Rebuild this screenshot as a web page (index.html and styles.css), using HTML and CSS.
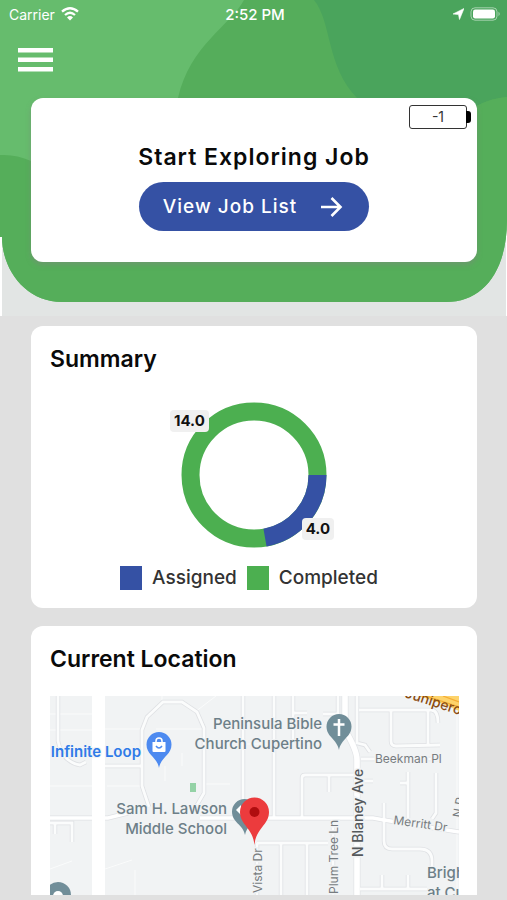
FILE: index.html
```html
<!DOCTYPE html>
<html lang="en">
<head>
  <meta charset="UTF-8">
  <meta name="viewport" content="width=device-width, initial-scale=1.0">
  <title>Job Dashboard</title>
  <link rel="stylesheet" href="styles.css">
</head>
<body>
  <div class="screen">
    <header class="header">
      <svg class="header-bg" viewBox="0 0 507 316" preserveAspectRatio="none" aria-hidden="true">
        <rect width="507" height="316" fill="#fff"/>
        <rect x="2" y="230" width="504" height="86" fill="#e2e5e4"/>
        <clipPath id="shape">
          <path d="M0 0H507V220C507 270 484 302 446 302H62C26 302 2 270 2 237H0Z"/>
        </clipPath>
        <g clip-path="url(#shape)">
          <rect width="507" height="316" fill="#66bc6d"/>
          <path d="M244 0C230 26 190 45 178 98V200H507V0Z" fill="#55ad5b"/>
          <path d="M314 0C332 22 326 66 357 98L420 130L476 106Q492 98 507 97V0Z" fill="#4aa45c"/>
          <path d="M0 155Q16 154 31 161L60 200H476V106Q492 98 507 97V316H0Z" fill="#55ae5a"/>
        </g>
      </svg>

      <div class="status">
        <span class="carrier">Carrier
          <svg width="18" height="14" viewBox="0 0 18 14" fill="none" stroke="#fff" stroke-width="2.3">
            <path d="M1 4.7Q9-2.2 17 4.7M4 8Q9 3.6 14 8"/>
            <path d="M9 13.5L6 10.4Q9 7.8 12 10.4Z" fill="#fff" stroke="none"/>
          </svg>
        </span>
        <span class="time">2:52 PM</span>
        <span class="status-icons">
          <svg width="11" height="12" viewBox="0 0 11 12"><path d="M11 .5L6.500 11.500L5.500 6.500L0 6Z" fill="#fff" stroke="#fff" stroke-width=".6"/></svg>
          <svg width="31" height="14" viewBox="0 0 31 14">
            <rect x="1" y=".8" width="26" height="12.4" rx="4" fill="none" stroke="#fff" stroke-opacity=".5"/>
            <rect x="3" y="2.6" width="22" height="8.8" rx="2.2" fill="#fff"/>
            <path d="M28.5 4.8Q31 7 28.5 9.2Z" fill="#fff" fill-opacity=".5"/>
          </svg>
        </span>
      </div>

      <button class="menu" type="button" aria-label="Menu">
        <svg width="35" height="24" viewBox="0 0 35 24" fill="#fff"><path d="M0 0H35V4.5H0ZM0 9.5H35V14H0ZM0 19H35V23.5H0Z"/></svg>
      </button>

      <section class="card explore">
        <div class="battery">-1</div>
        <h1>Start Exploring Job</h1>
        <button class="job-btn" type="button">View Job List
          <svg width="22" height="20" viewBox="0 0 22 20" fill="none" stroke="#fff" stroke-width="2.6"><path d="M0 10H19.5M10.5 1L19.5 10L10.5 19"/></svg>
        </button>
      </section>
    </header>

    <main class="content">
      <section class="card summary">
        <h2>Summary</h2>
        <div class="chart">
          <svg width="146" height="146" viewBox="0 0 146 146" fill="none" stroke-width="18">
            <circle cx="73" cy="73" r="63.5" stroke="#4caf50"/>
            <circle cx="73" cy="73" r="63.5" stroke="#3551a4" pathLength="18" stroke-dasharray="4 14"/>
          </svg>
          <span class="value completed">14.0</span>
          <span class="value assigned">4.0</span>
        </div>
        <ul class="legend">
          <li><span class="swatch blue"></span>Assigned</li>
          <li><span class="swatch green"></span>Completed</li>
        </ul>
      </section>

      <section class="card location">
        <h2>Current Location</h2>
        <svg class="map" viewBox="0 0 409 199" preserveAspectRatio="xMidYMin slice">
          <defs>
            <g id="small-roads">
              <path d="M8 0V45Q12 66 30 69L36 66"/>
              <path d="M99 111L92 90V34L97 21L113 6H132L147 16L154 32V97L147 109"/>
              <path d="M55 70H92M193 0V104M224 0V122"/>
              <path d="M252 122V82Q252 79 255 79H304M279 79V96"/>
              <path d="M307 0V47L315 49L320 56"/>
              <path d="M309 14H381Q388 14 388 27M341 15V45Q341 50 346 50L390 49M378 15V49"/>
              <path d="M243 0V47M243 17H257M288 0V18M273 18H288M311 63H392M312 85H323"/>
              <path d="M358 76V122M350 87H358M386 77V117L382 123"/>
              <path d="M334 107V145Q334 153 342 153H370Q382 153 382 165V175"/>
              <path d="M207 147H278M231 147V199M257 147V199M283 122V199M207 147V199"/>
              <path d="M310 193H377M332 179V193M358 179V193M0 127H22V146M5 127V138"/>
            </g>
            <g id="main-roads">
              <path d="M0 122H58L78 117M150 122H323L334 124L409 136"/>
            </g>
          </defs>
          <rect width="409" height="199" fill="#f1f3f4"/>
          <g fill="none" stroke="#fafbfb">
            <path d="M0 18H42M0 34H42M55 33H92M106 33H154M0 90H42M57 90H90M154 88H180M0 173L22 165M55 173L82 164M85 174V199M112 0V6M166 0L145 16M115 70V85M132 57V70M193 48H224M407 0V199"/>
          </g>
          <rect x="140" y="87" width="6" height="9" fill="#94d2a6"/>
          <use href="#small-roads" fill="none" stroke="#dfe1e4" stroke-width="4.4"/>
          <use href="#main-roads" fill="none" stroke="#dfe1e4" stroke-width="5"/>
          <path d="M295 0V34Q307 54 307 64V199" fill="none" stroke="#e1e3e6" stroke-width="7"/>
          <use href="#small-roads" fill="none" stroke="#fbfcfc" stroke-width="2.8"/>
          <use href="#main-roads" fill="none" stroke="#fff" stroke-width="3.6"/>
          <path d="M295 0V34Q307 54 307 64V199" fill="none" stroke="#fff" stroke-width="5.6"/>
          <path d="M48.5 0V199" stroke="#fff" stroke-width="13"/>
          <path d="M368 0H409V15Q390 6 368 0Z" fill="#fdd36b"/>
          <path d="M376 0L409 11M393 0L409 6" stroke="#f5ad35" stroke-width="1.2"/>

          <g class="place">
            <text x="91" y="61" class="blue-text">Infinite Loop</text>
            <text x="272" y="33">Peninsula Bible</text>
            <text x="272" y="53">Church Cupertino</text>
            <text x="177" y="118">Sam H. Lawson</text>
            <text x="177" y="138">Middle School</text>
            <text x="377" y="182" class="start">Brigh</text>
            <text x="377" y="202" class="start">at Cu</text>
          </g>
          <g class="street">
            <text x="325" y="67">Beekman Pl</text>
            <text transform="translate(343 128) rotate(8)">Merritt Dr</text>
            <text transform="translate(288 198) rotate(-90)">Plum Tree Ln</text>
            <text transform="translate(212 197) rotate(-90)">Vista Dr</text>
            <text transform="translate(313 161) rotate(-90)" class="avenue">N Blaney Ave</text>
            <text transform="translate(411 122) rotate(-80)">N P</text>
            <text transform="translate(354 1) rotate(18)" class="highway">Junipero</text>
          </g>

          <g transform="translate(109 72)">
            <path d="M0 0C-2-11-12.500-13-12.500-23.500A12.500 12.500 0 0 1 12.500-23.500C12.500-13 2-11 0 0Z" fill="#4d8af0"/>
            <path d="M-6.500-26H6.500V-17Q6.500-16 5.500-16H-5.500Q-6.500-16-6.500-17Z" fill="#fff"/>
            <path d="M-3-26V-27A3 3 0 0 1 3-27V-26" fill="none" stroke="#fff" stroke-width="1.500"/>
            <path d="M-3-22Q0-18 3-22" fill="none" stroke="#4d8af0" stroke-width="1.500"/>
          </g>
          <g transform="translate(289 54)">
            <path d="M0 0C-2-11-12.500-13-12.500-23.500A12.500 12.500 0 0 1 12.500-23.500C12.500-13 2-11 0 0Z" fill="#718e99"/>
            <path d="M0-31V-14M-5.500-25.500H5.500" stroke="#fff" stroke-width="2.500"/>
          </g>
          <path d="M195 139C193 128 182 127 182 115.500A12.500 12.500 0 0 1 207 115.500C207 127 197 128 195 139Z" fill="#718e99"/>
          <path d="M191 109L186 114L191 119Z" fill="#fff"/>
          <g transform="translate(8 199)"><circle r="13" fill="#718e99"/><circle cy="1" r="5" fill="#fff"/></g>
          <path d="M204.500 149C203 132 190 129 190 116A14.500 14.500 0 0 1 219 116C219 129 206 132 204.500 149Z" fill="#ec3b3d"/>
          <circle cx="204.500" cy="116" r="5" fill="#b00d0f"/>
        </svg>
      </section>
    </main>
  </div>
</body>
</html>
```

FILE: styles.css
```css
* {
  box-sizing: border-box;
}
body {
  margin: 0;
  background: #e0e0e0;
  color: #111;
  font-family: Inter, "Liberation Sans", sans-serif;
}
h1, h2 {
  margin: 0;
  color: #0a0a0a;
  font-weight: 600;
}
svg {
  display: block;
}
button {
  border: none;
  font-family: inherit;
  cursor: pointer;
}
.screen {
  min-height: 100vh;
  display: flex;
  flex-direction: column;
}
.card {
  background: #fff;
  border-radius: 12px;
}

/* header */
.header {
  position: relative;
  padding-bottom: 54px;
}
.header-bg {
  position: absolute;
  inset: 0;
  width: 100%;
  height: 100%;
  z-index: -1;
}
.status {
  display: grid;
  grid-template-columns: 1fr auto 1fr;
  align-items: center;
  height: 28px;
  padding: 0 6px 0 9px;
  color: #fff;
  font-size: 14px;
}
.carrier, .status-icons {
  display: flex;
  align-items: center;
  gap: 6px;
}
.status-icons {
  justify-content: flex-end;
}
.time {
  font-size: 15px;
  font-weight: 500;
}
.menu {
  display: block;
  margin: 20px 18px 26px;
  padding: 0;
  background: none;
}
.explore {
  position: relative;
  display: flex;
  flex-direction: column;
  align-items: center;
  margin: 0 30px 0 31px;
  padding: 44px 16px 31px;
  box-shadow: 0 3px 5px rgba(120, 140, 120, 0.6);
}
.explore h1 {
  font-size: 23px;
  line-height: 30px;
  letter-spacing: 1px;
}
.battery {
  position: absolute;
  top: 7px;
  right: 10px;
  width: 58px;
  height: 24px;
  border: 1px solid #333;
  border-radius: 3px;
  color: #333;
  font-size: 14px;
  line-height: 22px;
  text-align: center;
}
.battery::after {
  content: "";
  position: absolute;
  top: 5px;
  right: -5px;
  width: 5px;
  height: 12px;
  border-radius: 0 3px 3px 0;
  background: #000;
}
.job-btn {
  display: flex;
  align-items: center;
  gap: 24px;
  height: 49px;
  margin-top: 10px;
  padding: 0 26px 0 24px;
  border-radius: 25px;
  background: #3551a4;
  color: #fff;
  font-size: 19px;
  font-weight: 500;
  letter-spacing: 1px;
}

/* content */
.content {
  flex: 1;
  display: flex;
  flex-direction: column;
  gap: 18px;
  padding: 10px 30px 5px 31px;
}
.content h2 {
  font-size: 23px;
  line-height: 28px;
}
.summary {
  padding: 19px 19px 18px;
}
.chart {
  position: relative;
  width: 146px;
  margin: 29px auto 18px;
}
.value {
  position: absolute;
  padding: 0 4px;
  border-radius: 4px;
  background: #f0f0f0;
  color: #111;
  font-size: 15px;
  font-weight: 700;
  line-height: 22px;
}
.value.completed {
  top: 8px;
  left: -11px;
}
.value.assigned {
  right: -7px;
  bottom: 8px;
}
.legend {
  display: flex;
  justify-content: center;
  margin: 0;
  padding: 0;
  list-style: none;
  color: #333;
  font-size: 19px;
  font-weight: 500;
  line-height: 24px;
}
.legend li {
  display: flex;
  gap: 10px;
  margin-right: 10px;
}
.swatch {
  width: 22px;
  height: 24px;
}
.blue {
  background: #3551a4;
}
.green {
  background: #4caf50;
}
.location {
  flex: 1;
  display: flex;
  flex-direction: column;
  padding: 19px 18px 0 19px;
  border-radius: 12px 12px 0 0;
}
.map {
  flex: 1;
  width: 100%;
  min-height: 199px;
  margin-top: 23px;
}

/* map labels */
.place text {
  fill: #6d7f88;
  font-size: 15px;
  font-weight: 500;
  text-anchor: end;
  paint-order: stroke;
  stroke: #f1f3f4;
  stroke-width: 2px;
}
.place .start {
  text-anchor: start;
}
.place .blue-text {
  fill: #2f7be8;
  font-weight: 600;
}
.street text {
  fill: #777c80;
  font-size: 12px;
  paint-order: stroke;
  stroke: #f1f3f4;
  stroke-width: 3px;
}
.street .avenue {
  fill: #55595c;
  font-size: 14px;
  font-weight: 500;
}
.street .highway {
  fill: #8a4b12;
  font-size: 14px;
  font-weight: 500;
  stroke: none;
}
```
